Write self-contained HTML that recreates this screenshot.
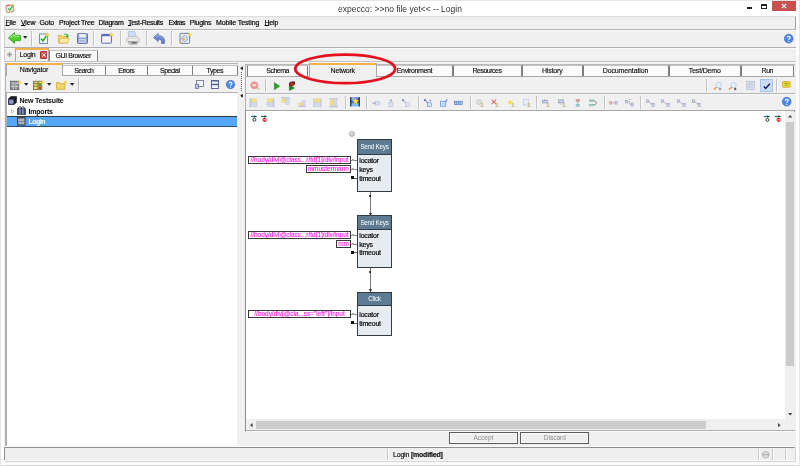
<!DOCTYPE html>
<html>
<head>
<meta charset="utf-8">
<title>expecco</title>
<style>
html,body{margin:0;padding:0;background:#fff;}
body{filter:blur(0.3px);}
body{width:800px;height:466px;overflow:hidden;background:#fff;font-family:"Liberation Sans",sans-serif;font-size:6.5px;color:#1a1a1a;position:relative;}
.a{position:absolute;box-sizing:border-box;}
.t{position:absolute;white-space:nowrap;line-height:10px;height:10px;font-size:7px;letter-spacing:-0.2px;color:#000;-webkit-text-stroke:0.18px currentColor;}
.c{text-align:center;}
.tab{position:absolute;box-sizing:border-box;border:1px solid #7e7e7e;border-top-color:#c4c4c4;border-bottom:none;background:#fbfbfb;text-align:center;font-size:7px;letter-spacing:-0.15px;line-height:9px;color:#0c0c0c;white-space:nowrap;-webkit-text-stroke:0.14px currentColor;}
.tab.on{background:#f0f0f0;border-top:2px solid #f7b048;border-color:#f7b048 #a8a8a8 #a8a8a8 #a8a8a8;}
.sep{position:absolute;width:1px;background:#c2c2c2;box-shadow:1px 0 0 #fdfdfd;}
.hl{position:absolute;height:1px;background:#a6a6a6;}
svg{position:absolute;overflow:visible;}
.m{color:#ff10e8;}
u{text-decoration-thickness:0.6px;text-underline-offset:0.4px;}
</style>
</head>
<body>
<!-- window chrome -->
<div class="a" style="left:0;top:0;width:800px;height:466px;border:1px solid #e6e6e6;"></div>
<div class="a" style="left:4px;top:16px;width:792px;height:446px;background:#f0f0f0;"></div>
<div class="t c" style="left:250px;width:300px;top:3.8px;font-size:8.5px;letter-spacing:0;-webkit-text-stroke:0;line-height:11px;height:11px;color:#333;">expecco: &gt;&gt;no file yet&lt;&lt; -- Login</div>

<!-- SECTION:TITLE -->
<svg class="a" style="left:5px;top:3.8px" width="10" height="9" viewBox="0 0 10 9">
 <rect x="1" y="1.3" width="7.6" height="6.8" rx="1.2" fill="#dfeaf6" stroke="#cf9150" stroke-width="1" transform="rotate(-10 4.8 4.6)"/>
 <path d="M3 4.4 L4.6 6 L8.4 1.4" stroke="#4cb648" stroke-width="1.3" fill="none"/>
 <path d="M1.6 1.6 L4.4 1" stroke="#d05048" stroke-width="1.1"/>
</svg>
<div class="a" style="left:747px;top:7.1px;width:5px;height:1.5px;background:#222;"></div>
<div class="a" style="left:761.3px;top:3.9px;width:6px;height:5px;border:0.9px solid #222;border-top-width:2px;border-radius:0.6px;"></div>
<div class="a" style="left:771.6px;top:0.6px;width:24.4px;height:10.7px;background:#c9504e;"></div>
<svg class="a" style="left:780.8px;top:3.2px" width="6" height="6" viewBox="0 0 6 6"><path d="M0.8 0.8 L5.2 5.2 M5.2 0.8 L0.8 5.2" stroke="#fff" stroke-width="1.1"/></svg>
<!-- SECTION:MENU -->
<div class="hl" style="left:4px;top:16px;width:791.6px;background:#dcdcdc;"></div>
<div class="a" style="left:794.6px;top:16.5px;width:1px;height:12px;background:#9c9c9c;"></div>
<div class="a" style="left:4px;top:16.5px;width:1px;height:45px;background:#cfcfcf;"></div>
<div class="hl" style="left:4px;top:28.5px;width:792px;background:#b5b5b5;"></div>
<div class="hl" style="left:4px;top:29.5px;width:792px;background:#fafafa;"></div>
<div class="t" style="left:5.5px;top:18.4px;"><u>F</u>ile</div>
<div class="t" style="left:21px;top:18.4px;"><u>V</u>iew</div>
<div class="t" style="left:39.5px;top:18.4px;">Goto</div>
<div class="t" style="left:59px;top:18.4px;">Project Tree</div>
<div class="t" style="left:98.5px;top:18.4px;">Diagram</div>
<div class="t" style="left:128px;top:18.4px;letter-spacing:-0.3px;"><u>T</u>est-Results</div>
<div class="t" style="left:168.6px;top:18.4px;letter-spacing:-0.6px;">Extras</div>
<div class="t" style="left:189.8px;top:18.4px;">Plugins</div>
<div class="t" style="left:216px;top:18.4px;letter-spacing:-0.1px;">Mobile Testing</div>
<div class="t" style="left:264.5px;top:18.4px;"><u>H</u>elp</div>
<!-- SECTION:TOOLBAR -->
<div class="hl" style="left:4px;top:46.5px;width:792px;background:#b0b0b0;"></div>
<div class="hl" style="left:4px;top:47.5px;width:792px;background:#fafafa;"></div>
<div class="sep" style="left:30.8px;top:31px;height:15px;"></div>
<div class="sep" style="left:93px;top:31px;height:15px;"></div>
<div class="sep" style="left:120px;top:31px;height:15px;"></div>
<div class="sep" style="left:146px;top:31px;height:15px;"></div>
<div class="sep" style="left:171px;top:31px;height:15px;"></div>
<!-- back arrow -->
<svg style="left:7.5px;top:32px" width="13" height="12" viewBox="0 0 13 12"><path d="M0.5 6 L6.5 0.6 L6.5 3.4 L12.4 3.4 L12.4 8.6 L6.5 8.6 L6.5 11.4 Z" fill="#4fd02c" stroke="#2a9a18" stroke-width="0.8"/><path d="M2 6 L6 2.4 L6 4.3 L11.5 4.3" stroke="#b8f59a" stroke-width="0.9" fill="none"/></svg>
<svg style="left:22.8px;top:36.2px" width="4.4" height="2.7" viewBox="0 0 5 3"><path d="M0 0 L5 0 L2.5 3 Z" fill="#222"/></svg>
<!-- check doc -->
<svg style="left:39px;top:32px" width="11" height="12" viewBox="0 0 11 12"><rect x="0.6" y="2" width="8" height="9.4" fill="#f4f8fb" stroke="#5f7f9a" stroke-width="0.9"/><path d="M2 6.5 L4 9 L7.4 3.6" stroke="#23a526" stroke-width="1.5" fill="none"/><path d="M8.3 0 L9.1 1.8 L11 2.2 L9.4 3.3 L9.6 5 L8.3 4 L6.8 4.8 L7.3 3.2 L6 2 L7.7 1.8Z" fill="#f7d23a"/></svg>
<!-- folder -->
<svg style="left:58px;top:32px" width="12" height="12" viewBox="0 0 12 12"><path d="M0.6 3.6 L4 3.6 L5 4.6 L9.4 4.6 L9.4 11 L0.6 11 Z" fill="#f5d868" stroke="#d4aa3a" stroke-width="0.8"/><path d="M0.8 11 L2.5 6.3 L11 6.3 L9.4 11 Z" fill="#fbeca4" stroke="#d4aa3a" stroke-width="0.6"/><path d="M5.5 2.4 C7.5 0.6 10 1.4 10.2 3.6 L11.4 3.4 L9.6 6 L7.6 4 L8.8 3.8 C8.6 2.6 7.2 2.2 6.4 3 Z" fill="#3fb83a"/></svg>
<!-- save -->
<svg style="left:77px;top:32.5px" width="11" height="11" viewBox="0 0 11 11"><rect x="0.5" y="0.5" width="10" height="10" rx="1" fill="#8da3d2" stroke="#5a6ea6" stroke-width="0.9"/><rect x="2.2" y="0.9" width="6.6" height="3.6" fill="#e9eef8"/><rect x="2" y="6" width="7" height="4" fill="#c8d2e8"/><rect x="2.8" y="7.6" width="5.4" height="0.8" fill="#7f97c8"/></svg>
<!-- new window -->
<svg style="left:101px;top:32px" width="13" height="12" viewBox="0 0 13 12"><rect x="0.6" y="2.4" width="9.8" height="8.8" rx="0.6" fill="#f8f4f8" stroke="#5a6ab0" stroke-width="1"/><rect x="0.6" y="2.4" width="9.8" height="1.8" fill="#5a6cb6"/><path d="M10.3 0 L11.1 1.8 L13 2.2 L11.4 3.3 L11.6 5 L10.3 4 L8.8 4.8 L9.3 3.2 L8 2 L9.7 1.8Z" fill="#f7d23a"/></svg>
<!-- printer -->
<svg style="left:125.5px;top:31px" width="14" height="14" viewBox="0 0 14 14"><path d="M3 6.4 L2 0.8 L8.4 0.4 L10.4 6 Z" fill="#cfe0f6" stroke="#9ab4dc" stroke-width="0.6"/><path d="M0.8 7.4 L3 5.6 L11.4 5.6 L13.2 7.4 L13.2 10.8 L0.8 10.8 Z" fill="#eeeeee" stroke="#a8a8a8" stroke-width="0.6"/><path d="M0.8 7.4 H13.2" stroke="#c0c0c0" stroke-width="0.5"/><path d="M2.4 10.4 L11.8 10.4 L10.8 13.2 L3.4 13.2 Z" fill="#d0d0d0" stroke="#8c8c8c" stroke-width="0.6"/><path d="M5.4 11.8 H10.6" stroke="#4a4a4a" stroke-width="1.1"/></svg>
<!-- undo -->
<svg style="left:153px;top:33px" width="13" height="11" viewBox="0 0 13 11"><path d="M0.4 4.4 L5.2 0.4 L5.2 2.8 C9.8 2.6 12.4 5 11.4 10.4 L8.4 10.4 C9.2 7.4 8 6 5.2 6.2 L5.2 8.6 Z" fill="#6c86cc" stroke="#4c64aa" stroke-width="0.7"/><path d="M1.6 4.4 L4.6 1.8 L4.6 3.6 C7.6 3.4 9.6 4 10.4 5.8" stroke="#9cb2e4" stroke-width="0.8" fill="none"/></svg>
<!-- settings -->
<svg style="left:179px;top:32px" width="13" height="12" viewBox="0 0 13 12"><rect x="1" y="1.4" width="9.6" height="10" rx="1" fill="#eef2fa" stroke="#5570a8" stroke-width="0.9"/><circle cx="5.6" cy="6.6" r="2.9" fill="#d8e2f2" stroke="#7890c0" stroke-width="0.7"/><circle cx="4.6" cy="7" r="1.3" fill="#f0b040"/><path d="M10.3 0 L11.1 1.8 L13 2.2 L11.4 3.3 L11.6 5 L10.3 4 L8.8 4.8 L9.3 3.2 L8 2 L9.7 1.8Z" fill="#f7d23a"/><circle cx="1.6" cy="10.6" r="1" fill="#f0a030"/></svg>
<!-- doc tab row -->
<div class="hl" style="left:4px;top:60.5px;width:792px;background:#c2c2c2;"></div>
<div class="hl" style="left:4px;top:61.5px;width:792px;background:#f8f8f8;"></div>
<svg style="left:7px;top:51.5px" width="5" height="5" viewBox="0 0 5 5"><path d="M2.5 0 V5 M0 2.5 H5" stroke="#9a9a9a" stroke-width="1.3"/></svg>
<div class="tab" style="left:49px;top:50.2px;width:48.5px;height:10.8px;line-height:9.4px;letter-spacing:-0.42px;">GUI Browser</div>
<div class="tab on" style="left:14.8px;top:48.3px;width:34.7px;height:13.2px;text-align:left;padding-left:3.8px;line-height:10.2px;letter-spacing:-0.25px;border-top-width:2px;">Login</div>
<div class="a" style="left:40px;top:51.3px;width:7.4px;height:7.4px;background:#e0504c;border:0.6px solid #b03030;border-radius:1px;"></div>
<svg style="left:41.7px;top:53px" width="4" height="4" viewBox="0 0 4 4"><path d="M0.3 0.3 L3.7 3.7 M3.7 0.3 L0.3 3.7" stroke="#fff" stroke-width="1"/></svg>
<!-- SECTION:LEFT -->
<!-- left panel frame -->
<div class="a" style="left:4.5px;top:63px;width:233.3px;height:383px;border:1px solid #b4b4b4;border-right:none;border-bottom:none;background:#f0f0f0;"></div>
<div class="tab" style="left:62px;top:64.6px;width:43.5px;height:11px;line-height:9.5px;letter-spacing:-0.5px;">Search</div>
<div class="tab" style="left:105px;top:64.6px;width:42.5px;height:11px;line-height:9.5px;letter-spacing:-0.5px;">Errors</div>
<div class="tab" style="left:147px;top:64.6px;width:45.5px;height:11px;line-height:9.5px;letter-spacing:-0.5px;">Special</div>
<div class="tab" style="left:192px;top:64.6px;width:45.5px;height:11px;line-height:9.5px;letter-spacing:-0.42px;">Types</div>
<div class="hl" style="left:62px;top:75px;width:176px;background:#a8a8a8;"></div>
<div class="tab on" style="left:5.5px;top:62.5px;width:57px;height:13.5px;line-height:10.6px;border-top-width:2px;letter-spacing:-0.16px;">Navigator</div>
<!-- left tool row -->
<div class="sep" style="left:78px;top:77.5px;height:13.5px;"></div>
<div class="hl" style="left:5.5px;top:92.1px;width:232px;background:#b4b4b4;"></div>
<svg style="left:10px;top:79.7px" width="12" height="10" viewBox="0 0 12 10"><rect x="0.4" y="1.2" width="8.4" height="8.4" fill="#8a8f96" stroke="#4a4f58" stroke-width="0.7"/><path d="M0.4 3 H8.8 M3.2 3 V9.6 M6 3 V9.6 M0.4 6.3 H8.8" stroke="#d8dce0" stroke-width="0.7"/><path d="M9.3 0 L10 1.5 L11.7 1.8 L10.4 2.8 L10.6 4.3 L9.3 3.5 L8 4.2 L8.4 2.8 L7.2 1.7 L8.8 1.5Z" fill="#f7d23a"/></svg>
<svg style="left:24px;top:83.4px" width="4.4" height="2.8" viewBox="0 0 5 3"><path d="M0 0 L5 0 L2.5 3 Z" fill="#222"/></svg>
<svg style="left:33px;top:79.7px" width="12" height="10" viewBox="0 0 12 10"><rect x="0.4" y="1.2" width="8.4" height="8.4" fill="#e8dc70" stroke="#5a5a30" stroke-width="0.7"/><path d="M0.4 3.6 H8.8 M0.4 6.2 H8.8 M5 1.2 V9.6" stroke="#5a5a30" stroke-width="0.7"/><rect x="5.6" y="4" width="2.8" height="1.8" fill="#3aa040"/><rect x="5.6" y="6.8" width="2.8" height="2.2" fill="#d84030"/><path d="M9.3 0 L10 1.5 L11.7 1.8 L10.4 2.8 L10.6 4.3 L9.3 3.5 L8 4.2 L8.4 2.8 L7.2 1.7 L8.8 1.5Z" fill="#f7d23a"/></svg>
<svg style="left:47px;top:83.4px" width="4.4" height="2.8" viewBox="0 0 5 3"><path d="M0 0 L5 0 L2.5 3 Z" fill="#222"/></svg>
<svg style="left:56px;top:79.7px" width="12" height="10" viewBox="0 0 12 10"><path d="M0.5 2.6 L3.6 2.6 L4.4 3.6 L9 3.6 L9 9.4 L0.5 9.4 Z" fill="#f2d468" stroke="#c9a030" stroke-width="0.7"/><path d="M9.3 0 L10 1.5 L11.7 1.8 L10.4 2.8 L10.6 4.3 L9.3 3.5 L8 4.2 L8.4 2.8 L7.2 1.7 L8.8 1.5Z" fill="#f7d23a"/></svg>
<svg style="left:70px;top:83.4px" width="4.4" height="2.8" viewBox="0 0 5 3"><path d="M0 0 L5 0 L2.5 3 Z" fill="#222"/></svg>
<!-- right icons of left tool row -->
<svg style="left:195px;top:79.7px" width="9" height="9" viewBox="0 0 9 9"><rect x="1.6" y="0.5" width="6.9" height="6" fill="#f4f6fb" stroke="#5a6a9a" stroke-width="0.8"/><rect x="0.5" y="4.2" width="3.2" height="4.3" fill="#b8c6e6" stroke="#5a6a9a" stroke-width="0.7"/></svg>
<svg style="left:210.5px;top:79.7px" width="8" height="9" viewBox="0 0 8 9"><rect x="0.5" y="0.5" width="7" height="8" fill="#f4f6fb" stroke="#4a5a92" stroke-width="0.9"/><path d="M0.5 4.5 H7.5" stroke="#4a5a92" stroke-width="1.4"/><path d="M0.5 1 H7.5" stroke="#4a5a92" stroke-width="1"/></svg>
<svg style="left:226px;top:79.7px" width="9" height="9" viewBox="0 0 9 9"><circle cx="4.5" cy="4.5" r="4.2" fill="#4a86e8" stroke="#2a5cc0" stroke-width="0.5"/><path d="M3.1 3.5 C3.1 1.7 5.9 1.7 5.9 3.4 C5.9 4.5 4.5 4.4 4.5 5.6" stroke="#fff" stroke-width="1.1" fill="none"/><circle cx="4.5" cy="7" r="0.65" fill="#fff"/></svg>
<!-- tree -->
<div class="a" style="left:4.6px;top:93.3px;width:232.7px;height:352.3px;background:#fff;border-left:2.4px solid #b0b0b0;"></div>
<div class="a" style="left:7px;top:116px;width:230px;height:10.5px;background:#55a6f7;border-top:1px solid #3a3a3a;border-bottom:1px solid #2a4a78;"></div>
<svg style="left:8.4px;top:96.2px" width="9" height="9" viewBox="0 0 9 9"><path d="M0.5 2.8 L2.8 0.5 L8.5 0.5 L8.5 6.2 L6.2 8.5 L0.5 8.5 Z" fill="#161c2a" stroke="#0c1018" stroke-width="0.6"/><rect x="0.9" y="3.3" width="4.9" height="4.8" fill="#8d9dc6" stroke="#2a3450" stroke-width="0.6"/></svg>
<div class="t" style="left:19.5px;top:96.4px;font-weight:bold;-webkit-text-stroke:0;color:#0a0a0a;">New Testsuite</div>
<svg style="left:11px;top:109px" width="4" height="5" viewBox="0 0 4 5"><path d="M0.5 0.5 L3.5 2.5 L0.5 4.5 Z" fill="#fff" stroke="#9a9a9a" stroke-width="0.6"/></svg>
<svg style="left:17.2px;top:106.4px" width="9" height="9" viewBox="0 0 9 9"><rect x="0.6" y="2.8" width="7.8" height="5.6" fill="#3e4c70" stroke="#1a2238" stroke-width="0.7"/><path d="M2.9 3 V8.4 M5.9 3 V8.4" stroke="#b8c6e0" stroke-width="0.9"/><path d="M1.6 2.8 C1.2 0 4 0 4.4 2.6 C4.8 0 7.6 0 7.2 2.8" stroke="#1a2238" stroke-width="1" fill="none"/></svg>
<div class="t" style="left:28.5px;top:106.7px;font-weight:bold;-webkit-text-stroke:0;color:#0a0a0a;">Imports</div>
<svg style="left:17.1px;top:117.1px" width="8.6" height="8.6" viewBox="0 0 9 9"><rect x="0.5" y="0.5" width="8" height="8" fill="#6e747c" stroke="#30353e" stroke-width="0.8"/><path d="M2.1 1.8 V7.4 M3.8 1.8 V7.4 M5.4 1.8 V7.4 M7.1 1.8 V7.4" stroke="#e4e8ee" stroke-width="0.9" stroke-dasharray="2.4 0.8"/></svg>
<div class="t" style="left:28.5px;top:116.6px;font-weight:bold;-webkit-text-stroke:0;letter-spacing:-0.5px;color:#fff;">Login</div>
<!-- splitter -->
<svg style="left:239px;top:64px" width="6" height="36" viewBox="0 0 6 36"><path d="M3.8 2.2 L3.8 6.2 L1.2 4.2 Z" fill="#111"/><path d="M3.8 29.8 L3.8 33.8 L1.2 31.8 Z" fill="#111"/><path d="M2.4 8 V28" stroke="#555" stroke-width="1" stroke-dasharray="1 1"/><path d="M4 8.5 V28.5" stroke="#fff" stroke-width="1" stroke-dasharray="1 1"/></svg>
<!-- SECTION:RIGHT -->
<div class="a" style="left:245px;top:63.5px;width:550px;height:368px;border-left:1px solid #b0b0b0;border-top:1px solid #b8b8b8;"></div>
<div class="a" style="left:245px;top:110px;width:1.4px;height:320.5px;background:#8e8e8e;"></div>
<div class="tab" style="left:246.8px;top:64.8px;width:61.7px;height:11.2px;line-height:10.6px;letter-spacing:-0.5px;">Schema</div>
<div class="tab" style="left:376px;top:64.8px;width:77px;height:11.2px;line-height:10.6px;letter-spacing:-0.35px;">Environment</div>
<div class="tab" style="left:452.5px;top:64.8px;width:69.0px;height:11.2px;line-height:10.6px;letter-spacing:-0.5px;">Resources</div>
<div class="tab" style="left:521.5px;top:64.8px;width:61.5px;height:11.2px;line-height:10.6px;letter-spacing:-0.17px;">History</div>
<div class="tab" style="left:582.5px;top:64.8px;width:86.0px;height:11.2px;line-height:10.6px;letter-spacing:-0.13px;">Documentation</div>
<div class="tab" style="left:668.5px;top:64.8px;width:72.5px;height:11.2px;line-height:10.6px;letter-spacing:-0.18px;">Test/Demo</div>
<div class="tab" style="left:741px;top:64.8px;width:52.5px;height:11.2px;line-height:10.6px;letter-spacing:-0.5px;">Run</div>
<div class="hl" style="left:246px;top:76px;width:549px;background:#a8a8a8;"></div>
<div class="tab on" style="left:308.5px;top:63px;width:68.5px;height:14px;line-height:11.6px;border-top-width:2px;letter-spacing:-0.2px;">Network</div>
<!-- toolbar 1 -->
<div class="hl" style="left:246px;top:92.5px;width:549px;background:#b4b4b4;"></div>
<div class="hl" style="left:246px;top:93.5px;width:549px;background:#fafafa;"></div>
<div class="sep" style="left:265px;top:79px;height:13px;"></div>
<div class="sep" style="left:706px;top:79px;height:13px;"></div>
<div class="sep" style="left:776px;top:79px;height:13px;"></div>
<svg style="left:249.6px;top:81px" width="10" height="10" viewBox="0 0 10 10"><path d="M6.4 6.2 L9 8.6" stroke="#d8cfa8" stroke-width="1.8"/><circle cx="4.3" cy="4.2" r="3.5" fill="#ec9a9a" stroke="#e07c7c" stroke-width="0.6"/><path d="M2.4 4.2 H6.2" stroke="#fff" stroke-width="1.2"/></svg>
<svg style="left:273.7px;top:81.6px" width="5.8" height="8.4" viewBox="0 0 6 8"><path d="M0.4 0.3 L5.8 4 L0.4 7.7 Z" fill="#22a422" stroke="#147a14" stroke-width="0.5"/></svg>
<svg style="left:287.5px;top:80.6px" width="8" height="10" viewBox="0 0 8 10"><path d="M1.4 4.6 L6.4 7 L1.4 9.4 Z" fill="#1f8f22" stroke="#0f5a12" stroke-width="0.5"/><ellipse cx="3.9" cy="3" rx="2.7" ry="2" fill="#e02020" stroke="#2a1010" stroke-width="0.7" transform="rotate(-25 3.9 3)"/><circle cx="6.2" cy="1.5" r="0.9" fill="#1a1a1a"/><path d="M1 1.6 L2 2.2 M2.4 0.6 L3 1.4" stroke="#1a1a1a" stroke-width="0.6"/></svg>
<!-- right side of toolbar 1 -->
<svg style="left:712px;top:80.5px" width="10" height="10" viewBox="0 0 10 10"><path d="M4.9 6 L1.8 8.5" stroke="#e89040" stroke-width="1.3"/><circle cx="6.6" cy="4.1" r="2.7" fill="#e6f1fc" stroke="#a4c6ee" stroke-width="0.7"/><path d="M7 8 H9.2" stroke="#333" stroke-width="0.9"/></svg>
<svg style="left:727px;top:80.5px" width="10" height="10" viewBox="0 0 10 10"><path d="M4.9 6 L1.8 8.5" stroke="#e89040" stroke-width="1.3"/><circle cx="6.6" cy="4.1" r="2.7" fill="#e6f1fc" stroke="#a4c6ee" stroke-width="0.7"/><path d="M7 8 H9.4 M8.2 6.8 V9.2" stroke="#333" stroke-width="0.9"/></svg>
<svg style="left:745.5px;top:81px" width="9" height="9" viewBox="0 0 9 9"><rect x="0.5" y="0.5" width="8" height="8" fill="#dfe5f2" stroke="#b4bdd4" stroke-width="0.7"/><path d="M3.2 0.5 V8.5 M5.9 0.5 V8.5 M0.5 3.2 H8.5 M0.5 5.9 H8.5" stroke="#b4bdd4" stroke-width="0.6"/></svg>
<div class="a" style="left:760px;top:79px;width:12.8px;height:12.8px;background:#cadcf4;border:1px solid #a4c4ea;"></div>
<svg style="left:763.2px;top:83px" width="7.6" height="6.4" viewBox="0 0 8 7"><path d="M0.8 3.8 L2.8 6 L7.4 0.8" stroke="#141c6c" stroke-width="1.6" fill="none"/></svg>
<svg style="left:782.3px;top:81.4px" width="8.6" height="6.8" viewBox="0 0 9 7"><rect x="0.5" y="0.5" width="8" height="6" rx="0.8" fill="#e6de28" stroke="#e0a040" stroke-width="0.9"/><path d="M2.2 2.6 H6.8 M2.8 4.2 H6" stroke="#8a8a20" stroke-width="0.7"/></svg>
<!-- toolbar 2 -->
<div class="hl" style="left:246px;top:109.5px;width:549px;background:#a8a8a8;"></div>
<div class="hl" style="left:246px;top:110.5px;width:549px;background:#9a9a9a;"></div>
<div class="sep" style="left:344.5px;top:96px;height:13px;"></div>
<div class="sep" style="left:365.5px;top:96px;height:13px;"></div>
<div class="sep" style="left:417.5px;top:96px;height:13px;"></div>
<div class="sep" style="left:469.5px;top:96px;height:13px;"></div>
<div class="sep" style="left:536px;top:96px;height:13px;"></div>
<div class="sep" style="left:603.6px;top:96px;height:13px;"></div>
<div class="sep" style="left:639.5px;top:96px;height:13px;"></div>
<svg style="left:249.1px;top:97.5px" width="9" height="9.5" viewBox="0 0 9 9.5"><rect x="0.6" y="0.3" width="1.3" height="9" fill="#b9c3e0"/><rect x="2.2" y="0.9" width="5" height="3.4" fill="#f5df7a" stroke="#e6c860" stroke-width="0.4"/><rect x="2.2" y="4.6" width="5.8" height="3.8" fill="#d3daec" stroke="#b9c3e0" stroke-width="0.5"/></svg>
<svg style="left:265.5px;top:97.5px" width="9" height="9.5" viewBox="0 0 9 9.5"><rect x="7.1" y="0.3" width="1.3" height="9" fill="#b9c3e0"/><rect x="1.8" y="0.9" width="5" height="3.4" fill="#f5df7a" stroke="#e6c860" stroke-width="0.4"/><rect x="1" y="4.6" width="5.8" height="3.8" fill="#d3daec" stroke="#b9c3e0" stroke-width="0.5"/></svg>
<svg style="left:281.0px;top:96.8px" width="9" height="9.5" viewBox="0 0 9 9.5"><rect x="0.2" y="0.2" width="8.6" height="1.2" fill="#b9c3e0"/><rect x="1" y="1.8" width="3.6" height="3.4" fill="#f5df7a" stroke="#e6c860" stroke-width="0.4"/><rect x="4.8" y="1.8" width="3.4" height="5.8" fill="#d3daec" stroke="#b9c3e0" stroke-width="0.5"/></svg>
<svg style="left:297.53px;top:98.87px" width="7.74" height="8.17" viewBox="0 0 9 9.5"><rect x="0.2" y="8.2" width="8.6" height="1.2" fill="#b9c3e0"/><rect x="1" y="4.6" width="3.6" height="3.4" fill="#f5df7a" stroke="#e6c860" stroke-width="0.4"/><rect x="4.8" y="2" width="3.4" height="6" fill="#d3daec" stroke="#b9c3e0" stroke-width="0.5"/></svg>
<svg style="left:313.0px;top:97.5px" width="9" height="9.5" viewBox="0 0 9 9.5"><rect x="0.3" y="0.3" width="1.2" height="9" fill="#b9c3e0"/><rect x="7.5" y="0.3" width="1.2" height="9" fill="#b9c3e0"/><rect x="1.8" y="0.9" width="5.4" height="3.4" fill="#f5df7a" stroke="#e6c860" stroke-width="0.4"/><rect x="1.8" y="4.8" width="5.4" height="3.6" fill="#d3daec" stroke="#b9c3e0" stroke-width="0.5"/></svg>
<svg style="left:328.8px;top:97.5px" width="9" height="9.5" viewBox="0 0 9 9.5"><rect x="0.2" y="0.2" width="8.6" height="1.2" fill="#b9c3e0"/><rect x="0.2" y="8.2" width="8.6" height="1.2" fill="#b9c3e0"/><rect x="1.2" y="1.8" width="3.2" height="6" fill="#f5df7a" stroke="#e6c860" stroke-width="0.4"/><rect x="4.8" y="1.8" width="3.2" height="6" fill="#d3daec" stroke="#b9c3e0" stroke-width="0.5"/></svg>
<svg style="left:350px;top:97px" width="10" height="9.6" viewBox="0 0 10 9.6"><rect x="0.2" y="0.4" width="9.6" height="8.8" fill="#4a78d0"/><rect x="0.2" y="0.2" width="1.3" height="9.2" fill="#1e2a5a"/><rect x="8.5" y="0.2" width="1.3" height="9.2" fill="#1e2a5a"/><rect x="1.5" y="6.4" width="7" height="2.8" fill="#7ec0f0"/><rect x="1.5" y="0.6" width="3" height="2.6" fill="#8fb4ee"/><path d="M5.6 1 L6.5 3.1 L8.6 3.3 L7 4.7 L7.5 6.9 L5.6 5.8 L3.7 6.9 L4.2 4.7 L2.6 3.3 L4.7 3.1Z" fill="#f8e040" stroke="#e8b820" stroke-width="0.3"/></svg>
<svg style="left:372.13px;top:98.83px" width="7.74" height="7.74" viewBox="0 0 9 9"><rect x="3.8" y="2.6" width="4.8" height="4.4" fill="#dde4f2" stroke="#aab6d4" stroke-width="0.6"/><path d="M0.4 4.8 H3.6 M2.2 3.6 L3.6 4.8 L2.2 6" stroke="#7a8ab8" stroke-width="0.7" fill="none"/></svg>
<svg style="left:387.13px;top:98.83px" width="7.74" height="7.74" viewBox="0 0 9 9"><rect x="2.2" y="4" width="4.8" height="4.6" fill="#dde4f2" stroke="#aab6d4" stroke-width="0.6"/><path d="M4.6 0.4 V3.6 M3.4 2.2 L4.6 0.8 L5.8 2.2" stroke="#7a8ab8" stroke-width="0.7" fill="none"/></svg>
<svg style="left:402.13px;top:98.83px" width="7.74" height="7.74" viewBox="0 0 9 9"><rect x="4" y="4.4" width="4.6" height="4.2" fill="#dde4f2" stroke="#aab6d4" stroke-width="0.6"/><path d="M0.6 0.8 L4 4.2" stroke="#5a6aa8" stroke-width="0.9"/><rect x="0.3" y="0.4" width="1.6" height="1.6" fill="#4a5a98"/></svg>
<svg style="left:423.63px;top:98.83px" width="7.74" height="7.74" viewBox="0 0 9 9"><rect x="4" y="4.4" width="4.6" height="4.2" fill="#d6e6fa" stroke="#5a8ad8" stroke-width="0.7"/><path d="M0.6 0.8 L4.4 4.6" stroke="#3a4aa8" stroke-width="1"/><rect x="0.2" y="0.3" width="1.8" height="1.8" fill="#3a4aa8"/><path d="M7.4 0.6 V3 M6.2 1.8 H8.6" stroke="#5a8ad8" stroke-width="0.7"/></svg>
<svg style="left:439.83px;top:98.83px" width="7.74" height="7.74" viewBox="0 0 9 9"><rect x="0.8" y="2.6" width="6" height="5.8" fill="#e6f0fc" stroke="#4a7ad0" stroke-width="0.8"/><rect x="2.2" y="4.2" width="3" height="2.4" fill="#a8c4f0"/><path d="M7.6 0.4 V2.8 M6.4 1.6 H8.8" stroke="#4a7ad0" stroke-width="0.7"/></svg>
<svg style="left:454.40px;top:98.83px" width="8.60" height="7.74" viewBox="0 0 10 9"><rect x="0.4" y="2.6" width="9.2" height="3.8" fill="#b8d0f4" stroke="#4a7ad0" stroke-width="0.8"/><path d="M2 4.5 H8" stroke="#2a4a98" stroke-width="1" stroke-dasharray="1.4 0.8"/></svg>
<svg style="left:476.20px;top:98.83px" width="8.60" height="7.74" viewBox="0 0 10 9"><circle cx="3.6" cy="3.6" r="2.8" fill="#e0e0e0" stroke="#b8b8b8" stroke-width="0.7"/><circle cx="7" cy="5.6" r="1.3" fill="#d2c48e"/><path d="M5 9 C5 6.6 9 6.6 9 9 Z" fill="#c4b884"/></svg>
<svg style="left:491.20px;top:98.83px" width="8.60" height="7.74" viewBox="0 0 10 9"><path d="M0.8 0.8 L6 6 M6 0.8 L0.8 6" stroke="#e06868" stroke-width="1.3"/><circle cx="7" cy="5.6" r="1.3" fill="#d2c48e"/><path d="M5 9 C5 6.6 9 6.6 9 9 Z" fill="#c4b884"/></svg>
<svg style="left:506.70px;top:98.83px" width="8.60" height="7.74" viewBox="0 0 10 9"><path d="M3.6 0.2 L4.6 2.4 L7 2.8 L5.2 4.4 L5.6 6.8 L3.6 5.6 L1.6 6.8 L2 4.4 L0.2 2.8 L2.6 2.4Z" fill="#f7dc50"/><circle cx="7" cy="5.6" r="1.3" fill="#d2c48e"/><path d="M5 9 C5 6.6 9 6.6 9 9 Z" fill="#c4b884"/></svg>
<svg style="left:522.70px;top:98.83px" width="8.60" height="7.74" viewBox="0 0 10 9"><rect x="0.6" y="0.6" width="5.6" height="6.4" fill="#e4ecf8" stroke="#b4c4e0" stroke-width="0.7"/><circle cx="7" cy="5.6" r="1.3" fill="#d2c48e"/><path d="M5 9 C5 6.6 9 6.6 9 9 Z" fill="#c4b884"/></svg>
<svg style="left:542.40px;top:98.83px" width="8.60" height="7.74" viewBox="0 0 10 9"><rect x="0.6" y="1.6" width="6" height="3" fill="#d0d8f0" stroke="#7a88c0" stroke-width="0.7"/><path d="M3.6 0 V1.6" stroke="#d06060" stroke-width="0.8"/><circle cx="7" cy="5.6" r="1.3" fill="#d2c48e"/><path d="M5 9 C5 6.6 9 6.6 9 9 Z" fill="#c4b884"/></svg>
<svg style="left:558.20px;top:98.83px" width="8.60" height="7.74" viewBox="0 0 10 9"><rect x="0.6" y="1" width="6" height="3.4" fill="#d0d8f0" stroke="#7a88c0" stroke-width="0.7"/><path d="M2 5 L3.4 6.4 L4.8 5" stroke="#7a88c0" stroke-width="0.7" fill="none"/><circle cx="7" cy="5.6" r="1.3" fill="#d2c48e"/><path d="M5 9 C5 6.6 9 6.6 9 9 Z" fill="#c4b884"/></svg>
<svg style="left:573.63px;top:98.83px" width="7.74" height="7.74" viewBox="0 0 9 9"><rect x="2.4" y="0.6" width="4.2" height="2" fill="#e8a0a0" stroke="#c87070" stroke-width="0.5"/><rect x="2.4" y="6.4" width="4.2" height="2" fill="#a0d0d0" stroke="#70a8a8" stroke-width="0.5"/><path d="M4.5 2.6 V6.4" stroke="#70a8a8" stroke-width="0.8"/></svg>
<svg style="left:589.40px;top:98.83px" width="8.60" height="7.74" viewBox="0 0 10 9"><rect x="0.6" y="1" width="4.6" height="2" fill="#a0d0d0" stroke="#70a8a8" stroke-width="0.5"/><rect x="0.6" y="6" width="4.6" height="2" fill="#a0d0d0" stroke="#70a8a8" stroke-width="0.5"/><path d="M5.2 2 C9.4 2 9.4 7 5.2 7" stroke="#555" stroke-width="0.8" fill="none"/></svg>
<svg style="left:609.40px;top:98.83px" width="8.60" height="7.74" viewBox="0 0 10 9"><rect x="0.5" y="3" width="2.4" height="3" fill="#e8c8d0" stroke="#c090a0" stroke-width="0.6"/><rect x="7.1" y="3" width="2.4" height="3" fill="#c8d0e8" stroke="#909cc0" stroke-width="0.6"/><path d="M2.9 4.5 H7.1" stroke="#d08090" stroke-width="0.8"/></svg>
<svg style="left:625.20px;top:98.83px" width="8.60" height="7.74" viewBox="0 0 10 9"><rect x="0.5" y="1.6" width="2.4" height="3" fill="#c8d0e8" stroke="#909cc0" stroke-width="0.6"/><rect x="7.1" y="4.6" width="2.4" height="3.6" fill="#c8d0e8" stroke="#909cc0" stroke-width="0.6"/><path d="M2.9 3 H5 V6 H7.1" stroke="#909cc0" stroke-width="0.7" fill="none"/><path d="M4.4 0.6 H6.4" stroke="#d07070" stroke-width="0.8"/></svg>
<svg style="left:645.70px;top:98.83px" width="8.60" height="7.74" viewBox="0 0 10 9"><rect x="0.5" y="1" width="2.4" height="3" fill="#d8deee" stroke="#8e98bc" stroke-width="0.7"/><rect x="7.1" y="5" width="2.4" height="3.4" fill="#d8deee" stroke="#8e98bc" stroke-width="0.7"/><path d="M2.9 2.6 L7.1 6.6" stroke="#8a92b0" stroke-width="0.8"/></svg>
<svg style="left:661.20px;top:98.83px" width="8.60" height="7.74" viewBox="0 0 10 9"><rect x="0.5" y="1" width="2.4" height="3" fill="#d8deee" stroke="#8e98bc" stroke-width="0.7"/><rect x="7.1" y="5" width="2.4" height="3.4" fill="#d8deee" stroke="#8e98bc" stroke-width="0.7"/><path d="M2.9 2.6 L7.1 6.6" stroke="#8a92b0" stroke-width="0.8"/></svg>
<svg style="left:676.70px;top:98.83px" width="8.60" height="7.74" viewBox="0 0 10 9"><rect x="0.5" y="1" width="2.4" height="3" fill="#d8deee" stroke="#8e98bc" stroke-width="0.7"/><rect x="7.1" y="5" width="2.4" height="3.4" fill="#d8deee" stroke="#8e98bc" stroke-width="0.7"/><path d="M2.9 2.6 L7.1 6.6" stroke="#8a92b0" stroke-width="0.8"/></svg>
<svg style="left:691.70px;top:98.83px" width="8.60" height="7.74" viewBox="0 0 10 9"><rect x="0.5" y="1" width="2.4" height="3" fill="#d8deee" stroke="#8e98bc" stroke-width="0.7"/><rect x="7.1" y="5" width="2.4" height="3.4" fill="#d8deee" stroke="#8e98bc" stroke-width="0.7"/><path d="M2.9 2.6 L7.1 6.6" stroke="#8a92b0" stroke-width="0.8"/></svg>
<svg style="left:782px;top:97px" width="9.4" height="9.4" viewBox="0 0 9 9"><circle cx="4.5" cy="4.5" r="4.2" fill="#4a86e8" stroke="#2a5cc0" stroke-width="0.5"/><path d="M3.1 3.5 C3.1 1.7 5.9 1.7 5.9 3.4 C5.9 4.5 4.5 4.4 4.5 5.6" stroke="#fff" stroke-width="1.1" fill="none"/><circle cx="4.5" cy="7" r="0.65" fill="#fff"/></svg>
<svg style="left:784px;top:33.5px" width="9.4" height="9.4" viewBox="0 0 9 9"><circle cx="4.5" cy="4.5" r="4.2" fill="#4a86e8" stroke="#2a5cc0" stroke-width="0.5"/><path d="M3.1 3.5 C3.1 1.7 5.9 1.7 5.9 3.4 C5.9 4.5 4.5 4.4 4.5 5.6" stroke="#fff" stroke-width="1.1" fill="none"/><circle cx="4.5" cy="7" r="0.65" fill="#fff"/></svg>
<svg style="left:290px;top:50px" width="110" height="38" viewBox="290 50 110 38"><ellipse cx="345.2" cy="68.85" rx="50" ry="14.3" fill="none" stroke="#e5101e" stroke-width="2.7"/></svg>
<!-- SECTION:DIAGRAM -->
<div class="a" style="left:246.2px;top:111.3px;width:538.8px;height:308px;background:#fff;"></div>
<svg style="left:249.5px;top:114.5px" width="8" height="8" viewBox="0 0 8 8"><path d="M1 1.5 H6.6" stroke="#1a6a72" stroke-width="1.2"/><path d="M4 0.6 L6.8 1.5 L4 2.4 Z" fill="#0c3a40"/><circle cx="4.4" cy="4.8" r="1.5" fill="#fff" stroke="#333" stroke-width="1"/></svg>
<svg style="left:260px;top:114.5px" width="8" height="8" viewBox="0 0 8 8"><path d="M1 1.5 H6.6" stroke="#1a6a72" stroke-width="1.2"/><path d="M4 0.6 L6.8 1.5 L4 2.4 Z" fill="#0c3a40"/><circle cx="4.6" cy="4.8" r="2.1" fill="#f01018"/><path d="M3.3 4.8 H5.9" stroke="#fff" stroke-width="0.9"/></svg>
<svg style="left:763px;top:114.5px" width="8" height="8" viewBox="0 0 8 8"><path d="M1 1.5 H6.6" stroke="#1a6a72" stroke-width="1.2"/><path d="M4 0.6 L6.8 1.5 L4 2.4 Z" fill="#0c3a40"/><circle cx="4.4" cy="4.8" r="1.5" fill="#fff" stroke="#333" stroke-width="1"/></svg>
<svg style="left:773.5px;top:114.5px" width="8" height="8" viewBox="0 0 8 8"><path d="M1 1.5 H6.6" stroke="#1a6a72" stroke-width="1.2"/><path d="M4 0.6 L6.8 1.5 L4 2.4 Z" fill="#0c3a40"/><circle cx="4.6" cy="4.8" r="2.1" fill="#f01018"/><path d="M3.3 4.8 H5.9" stroke="#fff" stroke-width="0.9"/></svg>
<div class="a" style="left:349px;top:131.4px;width:5.6px;height:5.6px;border-radius:50%;background:radial-gradient(circle at 40% 35%,#e4e4e4,#b0b0b0);border:1px solid #b4b4b4;"></div>
<div class="a" style="left:357px;top:139px;width:35px;height:52.5px;background:#e6ebf0;border:1px solid #2e3a44;"></div>
<div class="a c" style="left:357px;top:139px;width:35px;height:15.5px;background:#5d7b93;border:1px solid #2e3a44;color:#fff;font-size:6.3px;letter-spacing:-0.25px;line-height:14.0px;">Send Keys</div>
<div class="t" style="left:359.3px;top:155.9px;">locator</div>
<div class="t" style="left:359.3px;top:164.9px;">keys</div>
<div class="t" style="left:359.3px;top:173.5px;">timeout</div>
<div class="a" style="left:357px;top:214.8px;width:35px;height:53px;background:#e6ebf0;border:1px solid #2e3a44;"></div>
<div class="a c" style="left:357px;top:214.8px;width:35px;height:15.6px;background:#5d7b93;border:1px solid #2e3a44;color:#fff;font-size:6.3px;letter-spacing:-0.25px;line-height:13.8px;">Send Keys</div>
<div class="t" style="left:359.3px;top:230.5px;">locator</div>
<div class="t" style="left:359.3px;top:239.5px;">keys</div>
<div class="t" style="left:359.3px;top:248.0px;">timeout</div>
<div class="a" style="left:357px;top:292.3px;width:35px;height:43.5px;background:#e6ebf0;border:1px solid #2e3a44;"></div>
<div class="a c" style="left:357px;top:292.3px;width:35px;height:13.5px;background:#5d7b93;border:1px solid #2e3a44;color:#fff;font-size:6.3px;letter-spacing:-0.25px;line-height:12.0px;">Click</div>
<div class="t" style="left:359.3px;top:309.8px;">locator</div>
<div class="t" style="left:359.3px;top:318.5px;">timeout</div>
<div class="a c m" style="left:248px;top:156.3px;width:103px;height:8px;border:1px solid #383838;background:#fff;font-size:6.45px;line-height:6.5px;-webkit-text-stroke:0.1px #ff10e8;letter-spacing:0px;white-space:nowrap;overflow:hidden;">//body/div[@class...r/td[1]/div/input</div>
<div class="a" style="left:351px;top:159.9px;width:6px;height:1px;background:#8a8a8a;"></div>
<div class="a" style="left:352.2px;top:159.4px;width:2px;height:2px;background:#aaa;"></div>
<div class="a c m" style="left:305.5px;top:165.3px;width:45.5px;height:8px;border:1px solid #383838;background:#fff;font-size:6.45px;line-height:6.5px;-webkit-text-stroke:0.1px #ff10e8;letter-spacing:0px;white-space:nowrap;overflow:hidden;">mmustermann</div>
<div class="a" style="left:351px;top:168.9px;width:6px;height:1px;background:#8a8a8a;"></div>
<div class="a" style="left:352.2px;top:168.4px;width:2px;height:2px;background:#aaa;"></div>
<div class="a c m" style="left:248px;top:230.9px;width:103px;height:8px;border:1px solid #383838;background:#fff;font-size:6.45px;line-height:6.5px;-webkit-text-stroke:0.1px #ff10e8;letter-spacing:0px;white-space:nowrap;overflow:hidden;">//body/div[@class...r/td[1]/div/input</div>
<div class="a" style="left:351px;top:234.5px;width:6px;height:1px;background:#8a8a8a;"></div>
<div class="a" style="left:352.2px;top:234px;width:2px;height:2px;background:#aaa;"></div>
<div class="a c m" style="left:336px;top:239.9px;width:15px;height:8px;border:1px solid #383838;background:#fff;font-size:6.45px;line-height:6.5px;-webkit-text-stroke:0.1px #ff10e8;letter-spacing:0px;white-space:nowrap;overflow:hidden;">mm</div>
<div class="a" style="left:351px;top:243.5px;width:6px;height:1px;background:#8a8a8a;"></div>
<div class="a" style="left:352.2px;top:243px;width:2px;height:2px;background:#aaa;"></div>
<div class="a c m" style="left:248px;top:310.2px;width:103px;height:8px;border:1px solid #383838;background:#fff;font-size:6.45px;line-height:6.5px;-webkit-text-stroke:0.1px #ff10e8;letter-spacing:0px;white-space:nowrap;overflow:hidden;">//body/div[@cla...ss="left"]/input</div>
<div class="a" style="left:351px;top:313.8px;width:6px;height:1px;background:#8a8a8a;"></div>
<div class="a" style="left:352.2px;top:313.3px;width:2px;height:2px;background:#aaa;"></div>
<div class="a" style="left:351.4px;top:176.4px;width:2.9px;height:2.9px;background:#111;"></div>
<div class="a" style="left:354px;top:177.5px;width:3px;height:1px;background:#555;"></div>
<div class="a" style="left:351.4px;top:250.9px;width:2.9px;height:2.9px;background:#111;"></div>
<div class="a" style="left:354px;top:252.0px;width:3px;height:1px;background:#555;"></div>
<div class="a" style="left:351.4px;top:321.4px;width:2.9px;height:2.9px;background:#111;"></div>
<div class="a" style="left:354px;top:322.5px;width:3px;height:1px;background:#555;"></div>
<div class="a" style="left:369.8px;top:191.5px;width:0.7px;height:24.0px;background:#777;"></div>
<div class="a" style="left:369.1px;top:194.5px;width:2.4px;height:2.4px;background:#111;border-radius:50%;"></div>
<svg style="left:368.8px;top:212.5px" width="3" height="3" viewBox="0 0 4 4"><path d="M0 0 L4 0 L2 4 Z" fill="#222"/></svg>
<div class="a" style="left:369.8px;top:268px;width:0.7px;height:24.30000000000001px;background:#777;"></div>
<div class="a" style="left:369.1px;top:271px;width:2.4px;height:2.4px;background:#111;border-radius:50%;"></div>
<svg style="left:368.8px;top:289.3px" width="3" height="3" viewBox="0 0 4 4"><path d="M0 0 L4 0 L2 4 Z" fill="#222"/></svg>
<!-- SECTION:BOTTOM -->
<div class="a" style="left:785px;top:111px;width:9px;height:309px;background:#f0f0f0;"></div>
<div class="a" style="left:785.5px;top:121.8px;width:8.3px;height:244px;background:#cbcbcb;"></div>
<svg style="left:787.6px;top:114.5px" width="4.4" height="2.6" viewBox="0 0 5 3"><path d="M0 3 L5 3 L2.5 0 Z" fill="#444"/></svg>
<svg style="left:787.6px;top:413px" width="4.4" height="2.6" viewBox="0 0 5 3"><path d="M0 0 L5 0 L2.5 3 Z" fill="#444"/></svg>
<div class="a" style="left:246px;top:419.3px;width:548px;height:10.2px;background:#f0f0f0;"></div>
<div class="a" style="left:256px;top:420.5px;width:449.5px;height:8.5px;background:#cdcdcd;"></div>
<svg style="left:249.8px;top:422.6px" width="2.6" height="4.4" viewBox="0 0 3 5"><path d="M3 0 L3 5 L0 2.5 Z" fill="#444"/></svg>
<svg style="left:778px;top:422.6px" width="2.6" height="4.4" viewBox="0 0 3 5"><path d="M0 0 L0 5 L3 2.5 Z" fill="#444"/></svg>
<div class="hl" style="left:246px;top:429.5px;width:549px;background:#b0b0b0;"></div>
<div class="hl" style="left:246px;top:430.5px;width:549px;background:#fafafa;"></div>
<div class="a c" style="left:448.9px;top:432.2px;width:69px;height:11.5px;border:1px solid #5a5a5a;background:#efefef;color:#8c8c8c;font-size:6.5px;line-height:9px;box-shadow:inset 0 0 0 1px #fbfbfb;">Accept</div>
<div class="a c" style="left:520.3px;top:432.2px;width:69px;height:11.5px;border:1px solid #5a5a5a;background:#efefef;color:#8c8c8c;font-size:6.5px;line-height:9px;box-shadow:inset 0 0 0 1px #fbfbfb;">Discard</div>
<div class="hl" style="left:4.2px;top:445.7px;width:791px;height:1px;background:#fbfbfb;"></div>
<div class="hl" style="left:4.2px;top:446.9px;width:791px;height:1.5px;background:#909090;"></div>
<div class="a" style="left:4.2px;top:448.4px;width:791px;height:12px;background:#efefef;border-left:1px solid #8e8e8e;"></div>
<div class="a" style="left:4px;top:460.4px;width:792px;height:5px;background:#fafafa;"></div>
<div class="hl" style="left:5px;top:460.6px;width:791px;background:#d4d4d4;"></div>
<div class="a" style="left:795.2px;top:448.5px;width:1px;height:13px;background:#d4d4d4;"></div>
<div class="hl" style="left:0px;top:465px;width:800px;background:#d6d6d6;"></div>
<div class="a" style="left:387.4px;top:449.4px;width:1px;height:10.5px;background:#c8c8c8;box-shadow:1px 0 0 #fcfcfc;"></div>
<div class="a" style="left:758px;top:449.4px;width:1px;height:10.5px;background:#c8c8c8;box-shadow:1px 0 0 #fcfcfc;"></div>
<div class="a" style="left:772px;top:449.4px;width:1px;height:10.5px;background:#c8c8c8;box-shadow:1px 0 0 #fcfcfc;"></div>
<div class="a" style="left:784.5px;top:449.4px;width:1px;height:10.5px;background:#c8c8c8;box-shadow:1px 0 0 #fcfcfc;"></div>
<div class="t" style="left:393px;top:449.8px;font-size:7px;color:#111;">Login <b>[modified]</b></div>
<svg style="left:761.5px;top:451px" width="7.4" height="7.4" viewBox="0 0 8 8"><circle cx="4" cy="4" r="3.5" fill="#e2e2e2" stroke="#9a9a9a" stroke-width="0.7"/><path d="M0.6 4 H7.4" stroke="#8a8a8a" stroke-width="0.8"/></svg>
</body>
</html>
